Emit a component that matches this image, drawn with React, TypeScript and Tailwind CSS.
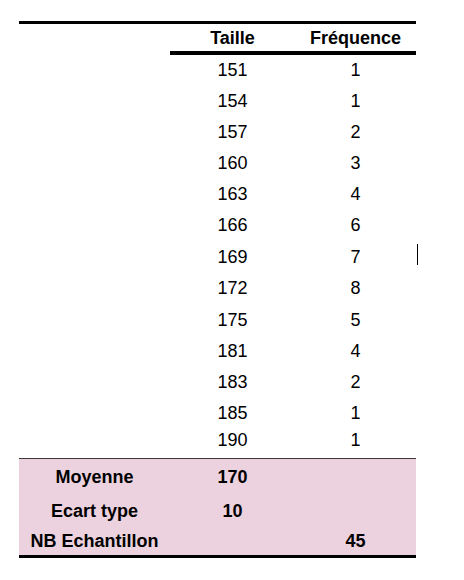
const rows = [
  ["151", "1", "h-[31px]"],
  ["154", "1", "h-[31px]"],
  ["157", "2", "h-[31px]"],
  ["160", "3", "h-[31px]"],
  ["163", "4", "h-[31px]"],
  ["166", "6", "h-[32px]"],
  ["169", "7", "h-[31px]"],
  ["172", "8", "h-[32px]"],
  ["175", "5", "h-[31px]"],
  ["181", "4", "h-[31px]"],
  ["183", "2", "h-[32px]"],
  ["185", "1", "h-[29px]"],
  ["190", "1", "h-[26px]"],
];

const stats = [
  { label: "Moyenne", taille: "170", freq: "", h: "h-[35px]" },
  { label: "Ecart type", taille: "10", freq: "", h: "h-[33px]" },
  { label: "NB Echantillon", taille: "", freq: "45", h: "h-[28px]" },
];

export default function App() {
  return (
    <div className="relative h-[580px] w-[464px] bg-white pt-[21px] font-['Liberation_Sans',Arial,sans-serif] text-[18px] leading-none text-black">
      <div className="ml-[19px] w-[397px]">
        <div className="h-[3px] bg-black" />
        <div className="grid h-[27px] grid-cols-[151px_125px_121px] items-center font-bold">
          <div />
          <div className="text-center">Taille</div>
          <div className="text-center">Fréquence</div>
        </div>
        <div className="ml-[151px] h-[4px] bg-black" />
        <div className="pb-[4px]">
          {rows.map(([t, f, h]) => (
            <div key={t} className={`grid grid-cols-[151px_125px_121px] items-center pb-[2px] ${h}`}>
              <div />
              <div className="text-center">{t}</div>
              <div className="text-center">{f}</div>
            </div>
          ))}
        </div>
        <div className="h-px bg-[#3a3a3a]" />
        <div className="bg-[#ecd2de] font-bold">
          {stats.map((s) => (
            <div key={s.label} className={`grid grid-cols-[151px_125px_121px] items-center ${s.h}`}>
              <div className="text-center">{s.label}</div>
              <div className="text-center">{s.taille}</div>
              <div className="text-center">{s.freq}</div>
            </div>
          ))}
        </div>
        <div className="h-[3px] bg-black" />
      </div>
      <div className="absolute left-[417px] top-[244px] h-[21px] w-px bg-black" />
    </div>
  );
}
